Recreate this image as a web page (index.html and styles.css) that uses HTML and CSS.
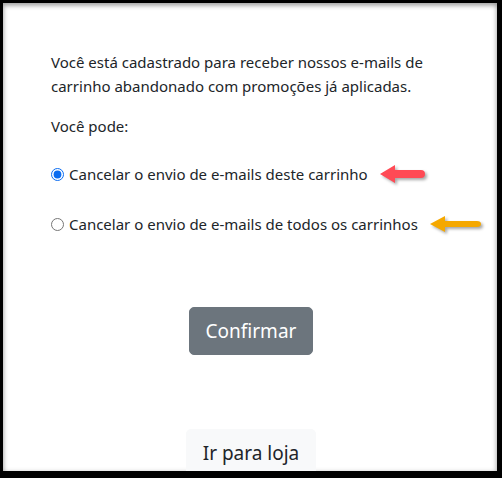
FILE: index.html
```html
<!DOCTYPE html>
<html lang="pt-BR">
<head>
  <meta charset="UTF-8" />
  <title>Cancelar e-mails</title>
  <link rel="stylesheet" href="styles.css">
</head>
<body>
  <div class="frame">
    <div class="content">
      <p class="intro">Você está cadastrado para receber nossos e-mails de carrinho abandonado com promoções já aplicadas.</p>
      <p class="lead">Você pode:</p>

      <div class="option">
        <input type="radio" name="optout" id="opt-cart" checked>
        <label for="opt-cart">Cancelar o envio de e-mails deste carrinho</label>
        <svg class="arrow" width="50" height="22" viewBox="0 0 50 22">
          <path d="M2 11 L17 2 L17 7 L43 7 Q47 7 47 11 Q47 15 43 15 L17 15 L17 20 Z" fill="#ff4a55"/>
        </svg>
      </div>

      <div class="option">
        <input type="radio" name="optout" id="opt-all">
        <label for="opt-all">Cancelar o envio de e-mails de todos os carrinhos</label>
        <svg class="arrow" width="56" height="20" viewBox="0 0 56 20">
          <path d="M2 10 L17 2 L17 7 L49 7 Q53 7 53 10 Q53 13 49 13 L17 13 L17 18 Z" fill="#f5a800"/>
        </svg>
      </div>

      <div class="actions">
        <button class="btn btn-secondary">Confirmar</button>
        <button class="btn btn-light">Ir para loja</button>
      </div>
    </div>
  </div>
</body>
</html>
```

FILE: styles.css
```css
html, body {
  margin: 0;
  padding: 0;
  background: #000;
}
.frame {
  width: 494px;
  height: 468px;
  margin: 3px 5px 7px 3px;
  background: #fff;
  overflow: hidden;
  box-shadow: inset 1px 3px 4px rgba(0, 0, 0, 0.3), inset -2px 0 4px rgba(0, 0, 0, 0.15);
  font-family: "Noto Sans", "Open Sans", sans-serif;
  font-size: 15px;
  line-height: 24px;
  color: #212529;
}
.content {
  padding: 47px 20px 0 48px;
}
p {
  margin: 0 0 16px 0;
}
.intro {
  width: 400px;
}
.lead {
  margin-bottom: 24px;
}
.option {
  display: flex;
  align-items: center;
  margin-bottom: 26px;
  white-space: nowrap;
}
.option input {
  flex-shrink: 0;
  width: 13px;
  height: 13px;
  margin: 0 5px 0 0;
  accent-color: #0a6cf0;
}
.arrow {
  flex-shrink: 0;
  margin-left: 10px;
  filter: drop-shadow(2px 2px 1.5px rgba(0, 0, 0, 0.35));
}
.actions {
  width: 400px;
  display: flex;
  flex-direction: column;
  align-items: center;
  gap: 74px;
  margin-top: 71px;
}
.btn {
  font-family: inherit;
  font-size: 19px;
  line-height: 30px;
  padding: 8px 16px;
  border: 1px solid transparent;
  border-radius: 5px;
  cursor: pointer;
}
.btn-secondary {
  background: #6c757d;
  border-color: #6c757d;
  color: #fff;
}
.btn-light {
  background: #f8f9fa;
  border-color: #f8f9fa;
  color: #212529;
}
```
